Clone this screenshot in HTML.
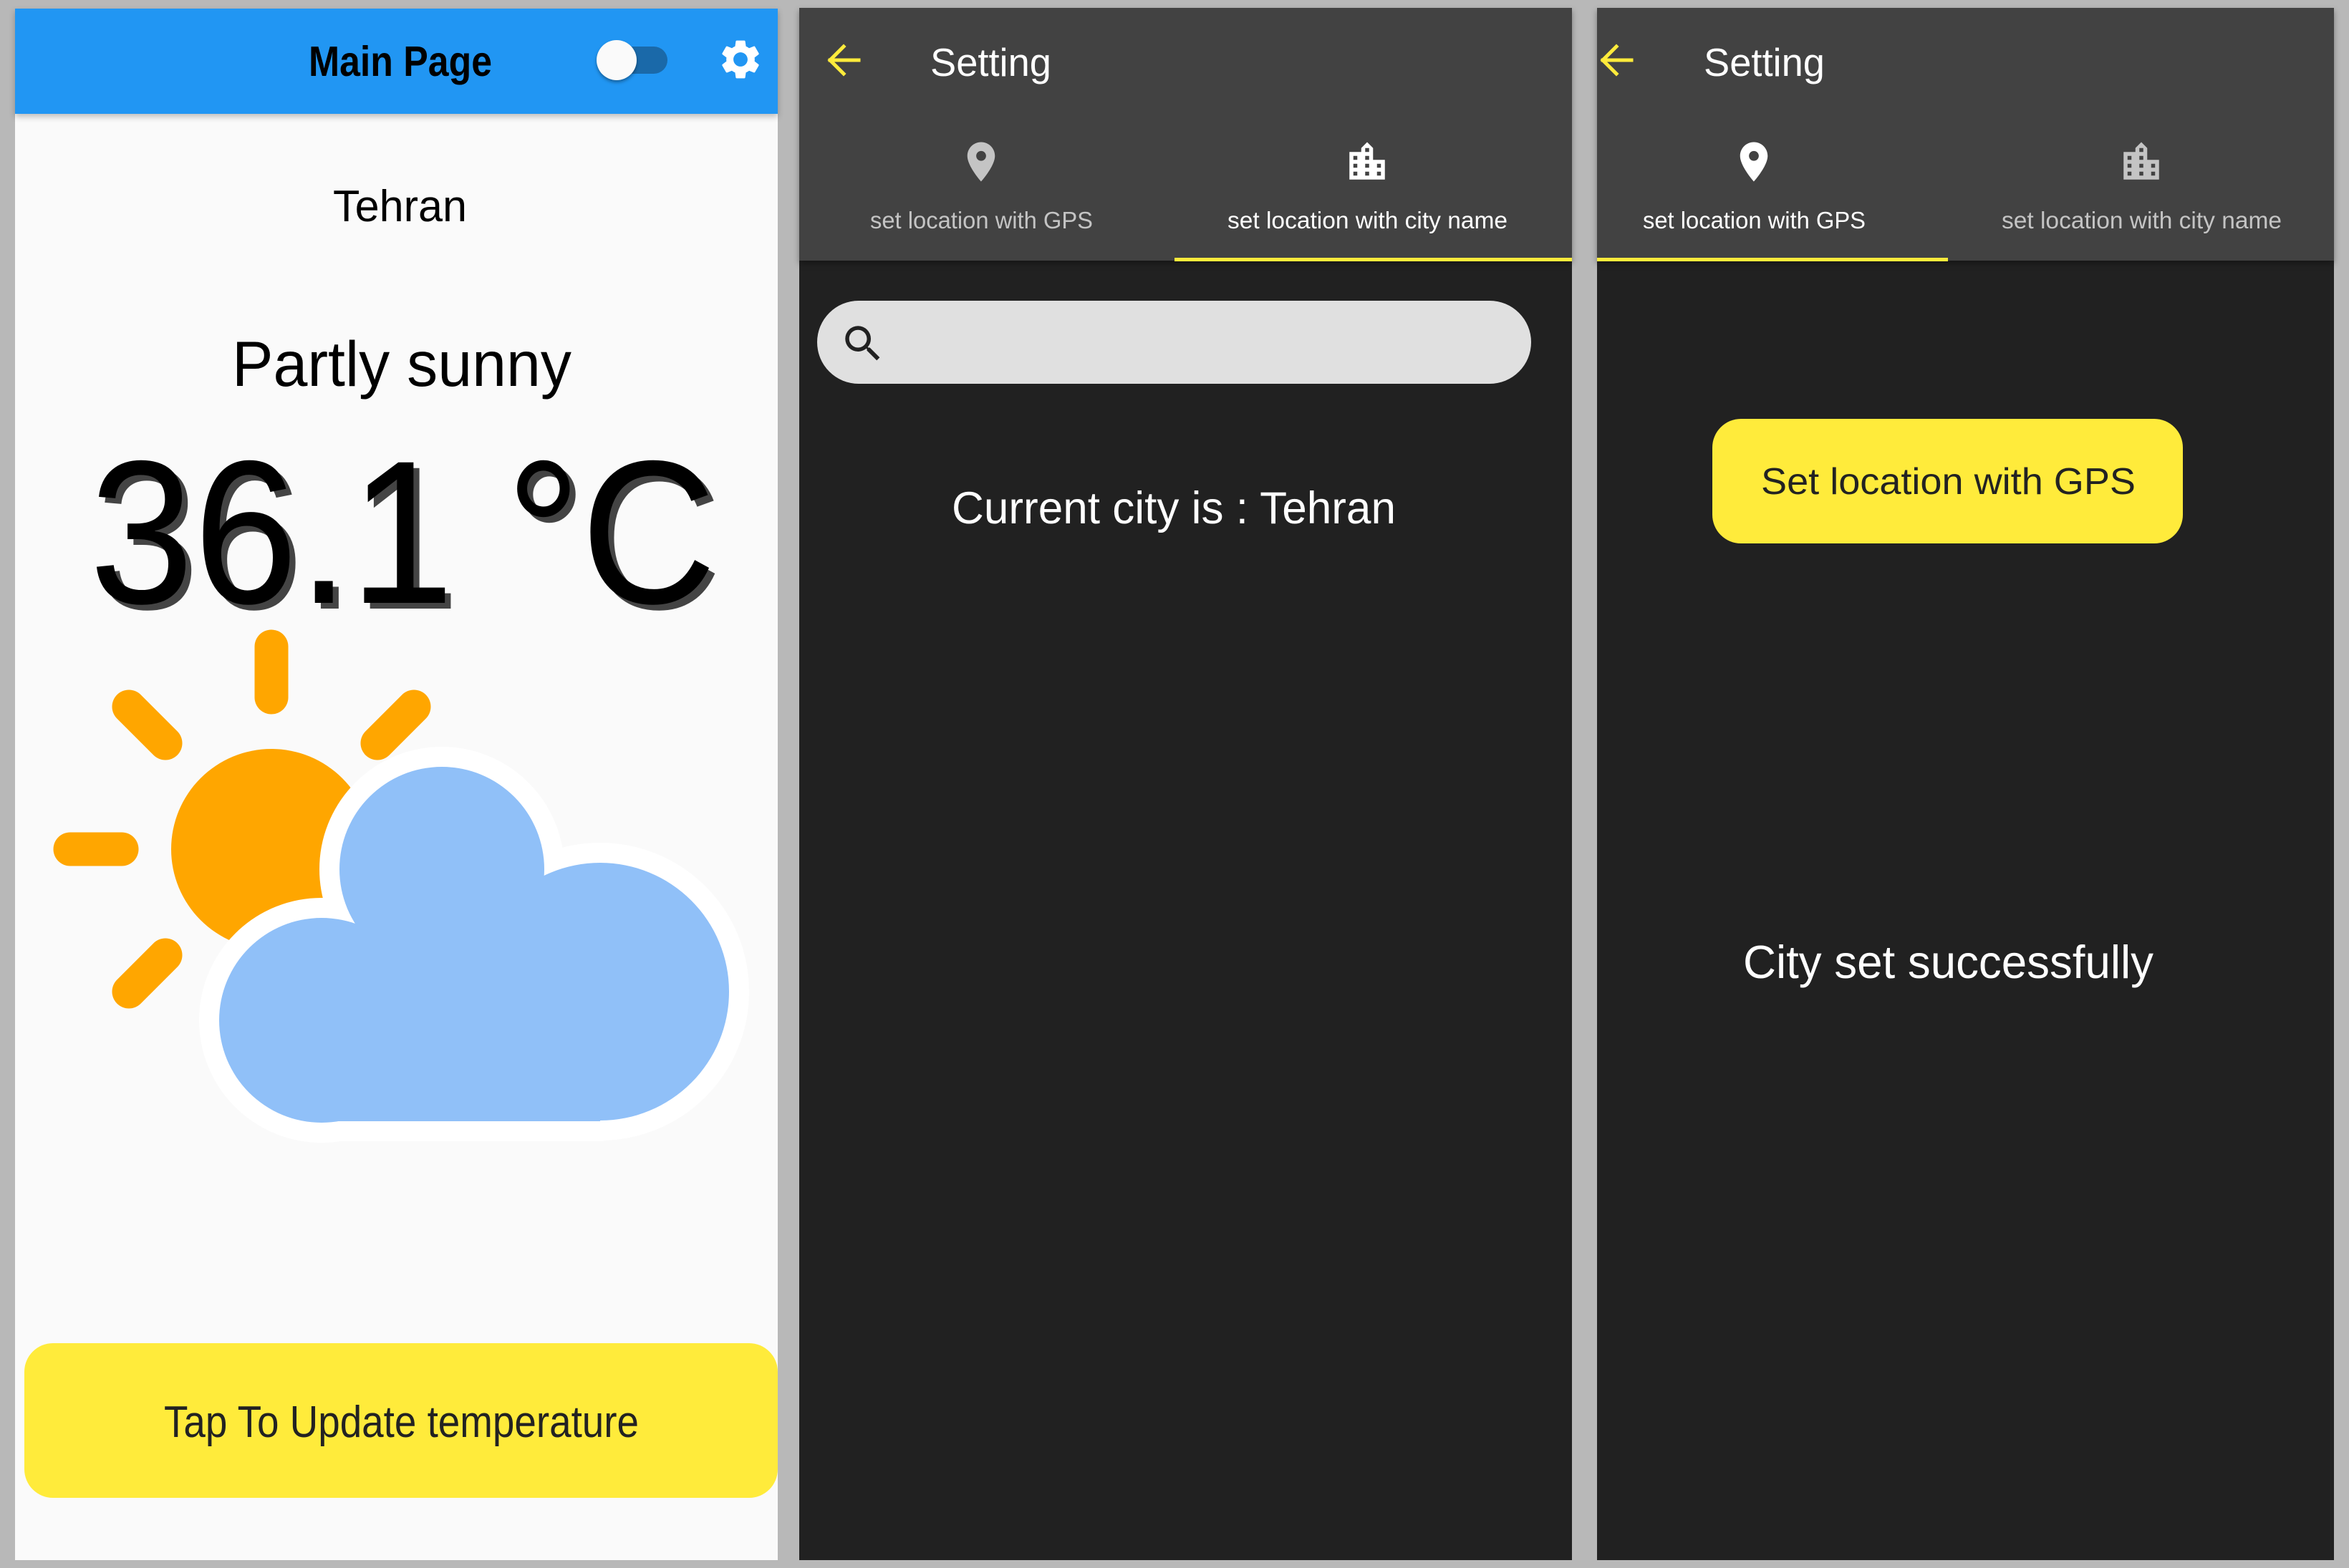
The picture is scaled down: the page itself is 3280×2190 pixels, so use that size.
<!DOCTYPE html>
<html><head><meta charset="utf-8">
<style>
html,body{margin:0;padding:0}
body{width:3280px;height:2190px;background:#b8b8b8;position:relative;overflow:hidden;font-family:"Liberation Sans",sans-serif}
.abs{position:absolute}
.t{position:absolute;white-space:nowrap;line-height:1;transform-origin:0 0}
</style></head><body>
<!-- Panel 1 -->
<div class="abs" style="left:21px;top:12px;width:1065px;height:2167px;background:#fafafa"></div>
<div class="abs" style="left:21px;top:12px;width:1065px;height:147px;background:#2196f3;box-shadow:0 4px 8px rgba(0,0,0,0.25)"></div>
<div class="abs" style="left:835px;top:65px;width:97px;height:38px;border-radius:19px;background:#1a69a9"></div>
<div class="abs" style="left:833px;top:56px;width:56px;height:56px;border-radius:50%;background:#fafafa;box-shadow:0 3px 5px rgba(0,0,0,0.35)"></div>
<svg class="abs" style="left:1001px;top:50px" width="66" height="66" viewBox="0 0 24 24"><path fill="#fff" d="M19.14 12.94c.04-.3.06-.61.06-.94 0-.32-.02-.64-.07-.94l2.030-1.58a.49.49 0 0 0 .12-.61l-1.92-3.32a.488.488 0 0 0-.59-.22l-2.39.96c-.5-.38-1.030-.7-1.62-.94l-.36-2.54a.484.484 0 0 0-.48-.41h-3.84c-.24 0-.43.17-.47.41l-.36 2.54c-.59.24-1.13.57-1.62.94l-2.39-.96c-.22-.08-.47 0-.59.22L2.74 8.87c-.12.21-.08.47.12.61l2.030 1.58c-.05.3-.09.63-.09.94s.02.64.07.94l-2.030 1.58a.49.49 0 0 0-.12.61l1.92 3.32c.12.22.37.29.59.22l2.39-.96c.5.38 1.030.7 1.62.94l.36 2.54c.05.24.24.41.48.41h3.84c.24 0 .44-.17.47-.41l.36-2.54c.59-.24 1.13-.56 1.62-.94l2.39.96c.22.08.47 0 .59-.22l1.92-3.32c.12-.22.07-.47-.12-.61l-2.010-1.58zM12 15.6c-1.98 0-3.6-1.62-3.6-3.6s1.62-3.6 3.6-3.6 3.6 1.62 3.6 3.6-1.62 3.6-3.6 3.6z"/></svg>
<svg class="abs" style="left:0;top:0" width="1100" height="1700">
<g stroke="#ffa600" stroke-width="47" stroke-linecap="round">
<line x1="379" y1="974" x2="379" y2="903"/>
<line x1="170" y1="1186" x2="98" y2="1186"/>
<line x1="231" y1="1038" x2="180" y2="987"/>
<line x1="527" y1="1038" x2="578" y2="987"/>
<line x1="231" y1="1334" x2="180" y2="1385"/>
</g>
<circle cx="379" cy="1186" r="140" fill="#ffa600"/>
<g fill="#fff" stroke="#fff" stroke-width="56" stroke-linejoin="round">
<circle cx="449" cy="1425" r="143"/><circle cx="617" cy="1214" r="143"/><circle cx="838" cy="1385" r="180"/><rect x="449" y="1290" width="389" height="276"/>
</g>
<g fill="#90c0f8">
<circle cx="449" cy="1425" r="143"/><circle cx="617" cy="1214" r="143"/><circle cx="838" cy="1385" r="180"/><rect x="449" y="1290" width="389" height="276"/>
</g>
</svg>
<div class="abs" style="left:34px;top:1876px;width:1052px;height:216px;border-radius:40px;background:#ffeb3b"></div>

<!-- Panel 2 -->
<div class="abs" style="left:1116px;top:11px;width:1079px;height:2168px;background:#212121"></div>
<div class="abs" style="left:1116px;top:11px;width:1079px;height:353px;background:#424242;box-shadow:0 4px 8px rgba(0,0,0,0.35)"></div>
<div class="abs" style="left:1640px;top:360px;width:555px;height:5px;background:#ffeb3b"></div>
<svg class="abs" style="left:1140px;top:40px" width="80" height="90"><g stroke="#ffeb3b" stroke-width="5" fill="none" stroke-linecap="square"><path d="M59 44H19M38 25L19 44L38 63"/></g></svg>
<svg class="abs" style="left:1337px;top:193px" width="66" height="66" viewBox="0 0 24 24"><path fill="#c4c4c4" d="M12 2C8.13 2 5 5.13 5 9c0 5.25 7 13 7 13s7-7.75 7-13c0-3.87-3.13-7-7-7zm0 9.5c-1.38 0-2.5-1.12-2.5-2.5s1.12-2.5 2.5-2.5 2.5 1.12 2.5 2.5-1.12 2.5-2.5 2.5z"/></svg>
<svg class="abs" style="left:1876px;top:193px" width="66" height="66" viewBox="0 0 24 24"><path fill="#fff" d="M15 11V5l-3-3-3 3v2H3v14h18V11h-6zm-8 8H5v-2h2v2zm0-4H5v-2h2v2zm0-4H5V9h2v2zm6 8h-2v-2h2v2zm0-4h-2v-2h2v2zm0-4h-2V9h2v2zm0-4h-2V5h2v2zm6 12h-2v-2h2v2zm0-4h-2v-2h2v2z"/></svg>
<div class="abs" style="left:1141px;top:420px;width:997px;height:116px;border-radius:58px;background:#e0e0e0"></div>
<svg class="abs" style="left:1172px;top:447px" width="66" height="66" viewBox="0 0 24 24"><path fill="#212121" d="M15.5 14h-.79l-.28-.27A6.471 6.471 0 0 0 16 9.5 6.5 6.5 0 1 0 9.5 16c1.61 0 3.090-.59 4.23-1.57l.27.28v.79l5 4.99L20.49 19l-4.99-5zm-6 0C7.010 14 5 11.99 5 9.5S7.010 5 9.5 5 14 7.010 14 9.5 11.99 14 9.5 14z"/></svg>

<!-- Panel 3 -->
<div class="abs" style="left:2230px;top:11px;width:1029px;height:2168px;background:#212121"></div>
<div class="abs" style="left:2230px;top:11px;width:1029px;height:353px;background:#424242;box-shadow:0 4px 8px rgba(0,0,0,0.35)"></div>
<div class="abs" style="left:2230px;top:360px;width:490px;height:5px;background:#ffeb3b"></div>
<svg class="abs" style="left:2219px;top:40px" width="80" height="90"><g stroke="#ffeb3b" stroke-width="5" fill="none" stroke-linecap="square"><path d="M59 44H19M38 25L19 44L38 63"/></g></svg>
<svg class="abs" style="left:2416px;top:193px" width="66" height="66" viewBox="0 0 24 24"><path fill="#fff" d="M12 2C8.13 2 5 5.13 5 9c0 5.25 7 13 7 13s7-7.75 7-13c0-3.87-3.13-7-7-7zm0 9.5c-1.38 0-2.5-1.12-2.5-2.5s1.12-2.5 2.5-2.5 2.5 1.12 2.5 2.5-1.12 2.5-2.5 2.5z"/></svg>
<svg class="abs" style="left:2957px;top:193px" width="66" height="66" viewBox="0 0 24 24"><path fill="#c4c4c4" d="M15 11V5l-3-3-3 3v2H3v14h18V11h-6zm-8 8H5v-2h2v2zm0-4H5v-2h2v2zm0-4H5V9h2v2zm6 8h-2v-2h2v2zm0-4h-2v-2h2v2zm0-4h-2V9h2v2zm0-4h-2V5h2v2zm6 12h-2v-2h2v2zm0-4h-2v-2h2v2z"/></svg>
<div class="abs" style="left:2391px;top:585px;width:657px;height:174px;border-radius:40px;background:#ffeb3b"></div>

<!-- Texts -->
<div class="t" id="t1" style="font-weight:bold;color:#000">Main Page</div>
<div class="t" id="t2" style="color:#000">Tehran</div>
<div class="t" id="t3" style="color:#000">Partly sunny</div>
<div class="t" id="t4" style="color:#000;text-shadow:9px 8px 0 #444">36.1 °C</div>
<div class="t" id="t5" style="color:#222">Tap To Update temperature</div>
<div class="t" id="t6" style="color:#fff">Setting</div>
<div class="t" id="t7" style="color:#c4c4c4">set location with GPS</div>
<div class="t" id="t8" style="color:#fff">set location with city name</div>
<div class="t" id="t9" style="color:#fff">Current city is : Tehran</div>
<div class="t" id="t10" style="color:#fff">Setting</div>
<div class="t" id="t11" style="color:#fff">set location with GPS</div>
<div class="t" id="t12" style="color:#c4c4c4">set location with city name</div>
<div class="t" id="t13" style="color:#222">Set location with GPS</div>
<div class="t" id="t14" style="color:#fff">City set successfully</div>
<script>
var T=[["t1",559,1,64,43,256],["t2",558,1,265,45,187],["t3",561,1,475,65,474],["t4",562,1,636,208,875],
["t5",560,1,1963,45,663],["t6",1299,0,66,40,169],["t7",1370,1,296,24,311],["t8",1909,1,296,24,391],
["t9",1639,1,686,46,620],["t10",2379,0,66,40,169],["t11",2449,1,296,24,311],["t12",2990,1,296,24,391],
["t13",2720,1,653,38,523],["t14",2720,1,1320,47,573]];
T.forEach(function(a){var e=document.getElementById(a[0]);var fs=a[4]/0.729;e.style.fontSize=fs+"px";
var w=e.getBoundingClientRect().width;var s=a[5]/w;var left=a[2]?a[1]-a[5]/2:a[1];
e.style.left=left+"px";e.style.top=(a[3]-0.118*fs)+"px";e.style.transform="scaleX("+s+")";});
</script>
</body></html>
